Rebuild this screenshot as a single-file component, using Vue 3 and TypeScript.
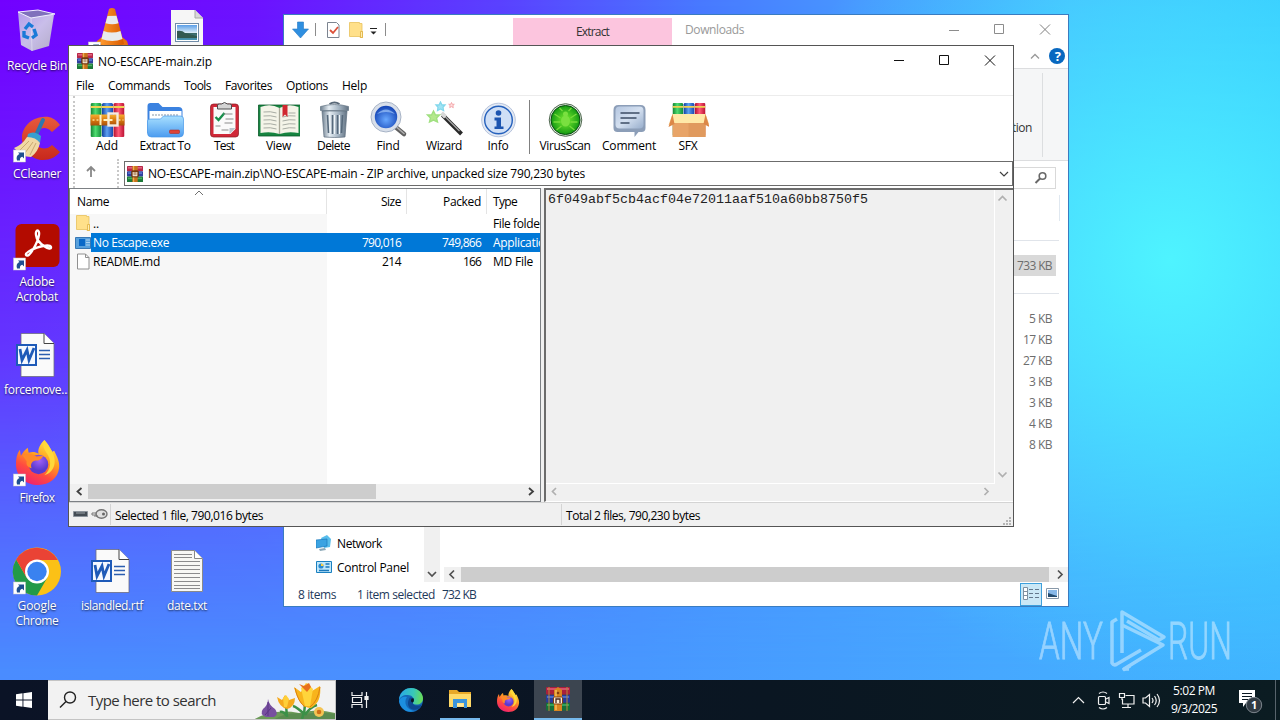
<script setup lang="ts">
interface DeskIcon {
  id: string
  x: number
  y: number
  link: boolean
  lines: { text: string; w: number }[]
}

// Adjusts tracking so that a label occupies the given width in pixels.
const vFit = {
  mounted(el: HTMLElement, binding: { value: number }) {
    const natural = el.getBoundingClientRect().width
    const count = (el.textContent || '').trim().length
    if (count > 0) el.style.letterSpacing = (binding.value - natural) / count + 'px'
  },
}

const deskIcons: DeskIcon[] = [
  { id: 'bin', x: -1, y: 5, link: false, lines: [{ text: 'Recycle Bin', w: 60 }] },
  { id: 'vlc', x: 74, y: 5, link: true, lines: [] },
  { id: 'pic', x: 149, y: 5, link: false, lines: [] },
  { id: 'cc', x: -1, y: 113, link: true, lines: [{ text: 'CCleaner', w: 48 }] },
  { id: 'acro', x: -1, y: 221, link: true, lines: [{ text: 'Adobe', w: 35 }, { text: 'Acrobat', w: 42 }] },
  { id: 'word', x: -1, y: 329, link: false, lines: [{ text: 'forcemove...', w: 66 }] },
  { id: 'fox', x: -1, y: 437, link: true, lines: [{ text: 'Firefox', w: 35 }] },
  { id: 'chrome', x: -1, y: 545, link: true, lines: [{ text: 'Google', w: 39 }, { text: 'Chrome', w: 43 }] },
  { id: 'word', x: 74, y: 545, link: false, lines: [{ text: 'islandled.rtf', w: 62 }] },
  { id: 'txt', x: 149, y: 545, link: false, lines: [{ text: 'date.txt', w: 40 }] },
]

const menus = [
  { text: 'File', w: 18 },
  { text: 'Commands', w: 62 },
  { text: 'Tools', w: 27 },
  { text: 'Favorites', w: 47 },
  { text: 'Options', w: 42 },
  { text: 'Help', w: 25 },
]

const tools = [
  { id: 'add', text: 'Add', cell: 44, w: 22 },
  { id: 'extract', text: 'Extract To', cell: 72, w: 51 },
  { id: 'test', text: 'Test', cell: 46, w: 20 },
  { id: 'view', text: 'View', cell: 63, w: 25 },
  { id: 'delete', text: 'Delete', cell: 47, w: 33 },
  { id: 'find', text: 'Find', cell: 62, w: 23 },
  { id: 'wizard', text: 'Wizard', cell: 50, w: 36 },
  { id: 'info', text: 'Info', cell: 58, w: 21 },
  { id: 'sep', text: '', cell: 2, w: 0 },
  { id: 'virus', text: 'VirusScan', cell: 68, w: 51 },
  { id: 'comment', text: 'Comment', cell: 60, w: 54 },
  { id: 'sfx', text: 'SFX', cell: 58, w: 19 },
]

const files = [
  { icon: 'folder', name: '..', nw: 6, size: '', sw: 0, packed: '', pw: 0, type: 'File folder', tw: 51, sel: false },
  { icon: 'exe', name: 'No Escape.exe', nw: 76, size: '790,016', sw: 39, packed: '749,866', pw: 39, type: 'Application', tw: 59, sel: true },
  { icon: 'doc', name: 'README.md', nw: 67, size: '214', sw: 19, packed: '166', pw: 18, type: 'MD File', tw: 40, sel: false },
]

const sizes = [
  { text: '5 KB', w: 23 },
  { text: '17 KB', w: 29 },
  { text: '27 KB', w: 29 },
  { text: '3 KB', w: 23 },
  { text: '3 KB', w: 23 },
  { text: '4 KB', w: 23 },
  { text: '8 KB', w: 23 },
]
</script>

<template>
  <div class="screen">
    <div class="sky"></div>
    <svg class="defs" width="0" height="0">
      <defs>
        <linearGradient id="gRed" x1="0" x2="1"><stop offset="0" stop-color="#b01030" /><stop offset=".45" stop-color="#ff5a78" /><stop offset="1" stop-color="#b80f30" /></linearGradient>
        <linearGradient id="gBlue" x1="0" x2="1"><stop offset="0" stop-color="#1240a0" /><stop offset=".45" stop-color="#5da0f0" /><stop offset="1" stop-color="#1848b0" /></linearGradient>
        <linearGradient id="gGreen" x1="0" x2="1"><stop offset="0" stop-color="#0f8030" /><stop offset=".45" stop-color="#4fdc70" /><stop offset="1" stop-color="#128a38" /></linearGradient>
        <linearGradient id="gBelt" x1="0" y1="0" x2="0" y2="1"><stop offset="0" stop-color="#f8b030" /><stop offset=".5" stop-color="#d87810" /><stop offset="1" stop-color="#a85008" /></linearGradient>
        <linearGradient id="gFold" x1="0" y1="0" x2="0" y2="1"><stop offset="0" stop-color="#a8e0ff" /><stop offset="1" stop-color="#4c9cf0" /></linearGradient>
        <linearGradient id="gSteel" x1="0" x2="1"><stop offset="0" stop-color="#6f8090" /><stop offset=".3" stop-color="#e4ecf2" /><stop offset=".65" stop-color="#a6b6c4" /><stop offset="1" stop-color="#627282" /></linearGradient>
        <radialGradient id="gLens" cx=".5" cy=".6"><stop offset="0" stop-color="#68a8ff" /><stop offset="1" stop-color="#1748b8" /></radialGradient>
        <radialGradient id="gVirus"><stop offset="0" stop-color="#7cf030" /><stop offset="1" stop-color="#159a14" /></radialGradient>
        <linearGradient id="gNote" x1="0" y1="0" x2="1" y2="1"><stop offset="0" stop-color="#b4c6e0" /><stop offset=".5" stop-color="#d4e0f0" /><stop offset="1" stop-color="#98aecc" /></linearGradient>
        <linearGradient id="gFox" x1=".8" y1="0" x2=".3" y2="1"><stop offset="0" stop-color="#fff04a" /><stop offset=".4" stop-color="#ffa020" /><stop offset=".7" stop-color="#ff4b40" /><stop offset="1" stop-color="#f02070" /></linearGradient>
        <radialGradient id="gFoxCore" cx=".55" cy=".3"><stop offset="0" stop-color="#a060f8" /><stop offset="1" stop-color="#5a3ad0" /></radialGradient>
        <linearGradient id="gBin" x1="0" y1="0" x2="1" y2="1"><stop offset="0" stop-color="#b8a8e8" /><stop offset=".5" stop-color="#d0cce8" /><stop offset="1" stop-color="#b8b8c4" /></linearGradient>
        <linearGradient id="gCone" x1="0" x2="1"><stop offset="0" stop-color="#ff9a30" /><stop offset="1" stop-color="#d85a00" /></linearGradient>
        <linearGradient id="gCC" x1="0" y1="0" x2="0" y2="1"><stop offset="0" stop-color="#e85a3c" /><stop offset="1" stop-color="#c8281c" /></linearGradient>
        <linearGradient id="gEdge" x1="0" y1=".2" x2="1" y2=".3"><stop offset="0" stop-color="#28a8e8" /><stop offset=".6" stop-color="#38c8b8" /><stop offset="1" stop-color="#68dc58" /></linearGradient>
        <linearGradient id="gSky" x1="0" y1="0" x2="0" y2="1"><stop offset="0" stop-color="#5a9ee8" /><stop offset=".5" stop-color="#d8eaf6" /><stop offset=".55" stop-color="#3c6864" /><stop offset="1" stop-color="#4898b8" /></linearGradient>
      </defs>
      <symbol id="rar" viewBox="0 0 16 16">
        <rect x="0" y="0" width="16" height="5.3" rx=".6" fill="#b8284a" /><rect x="1" y="1" width="14" height="1.6" fill="#e0647c" />
        <rect x="0" y="5.3" width="16" height="5.3" rx=".6" fill="#3040a0" /><rect x="1" y="6.3" width="14" height="1.6" fill="#5a78d0" />
        <rect x="0" y="10.6" width="16" height="5.4" rx=".6" fill="#1c7838" /><rect x="1" y="11.6" width="14" height="1.6" fill="#48b060" />
        <rect x="5.3" width="5.4" height="16" fill="#c8721c" /><rect x="6" width="1.2" height="16" fill="#eeb050" />
        <rect x="4.6" y="4.8" width="6.8" height="6.2" rx="1" fill="#7c3b0c" stroke="#602c10" stroke-width=".7" />
        <path d="M6.200 6v3.800h3.600V6M8 6v3.500" fill="none" stroke="#f8ecd8" stroke-width="1.100" />
      </symbol>
      <symbol id="rarbig" viewBox="0 0 24 24">
        <rect x="0" y="0" width="24" height="7.5" rx="1" fill="#a8203c" /><path d="M1 2h22" stroke="#e86880" stroke-width="1.4" />
        <rect x="0" y="8" width="24" height="7.5" rx="1" fill="#263c98" /><path d="M1 10h22" stroke="#5880e0" stroke-width="1.4" />
        <rect x="0" y="16" width="24" height="7.5" rx="1" fill="#14703a" /><path d="M1 18h22" stroke="#40b868" stroke-width="1.4" />
        <path d="M3 0v24M21 0v24" stroke="#b8883c" stroke-width="1" />
        <path d="M8 24V3l4-3 4 3v21z" fill="#d9851f" /><path d="M10 23V3" stroke="#f8c864" stroke-width="1.3" />
        <rect x="7.5" y="10" width="9" height="7" rx="1" fill="#f8ecd4" stroke="#803c10" /><path d="M10 16v-4h4v4" fill="none" stroke="#4c281c" stroke-width="1.3" />
        <circle cx="12" cy="6" r="1.3" fill="#823e10" />
      </symbol>
      <symbol id="fox" viewBox="0 0 48 48">
        <path d="M31 2c5 5 6 9 8 12l2-1c3 6 6 12 5 18-1 10-10 17-21 17C12 48 2 39 2 27 2 21 3 16 6 12l1 6c2-3 4-6 7-8l1 5c3-1 7-1 10 1-1-5 2-10 6-14z" fill="url(#gFox)" />
        <circle cx="25" cy="27" r="10" fill="url(#gFoxCore)" />
        <path d="M9 18c5-3 9-2 14 1l7-1c-2 4-5 5-8 5-5 1-5 5-4 8-4-1-6-4-5-7z" fill="#ff8a28" />
        <path d="M31 2c-3 7 1 11 4 16 3 6 3 14-4 20 11-3 13-15 8-24C37 9 34 8 31 2z" fill="#ffd83a" />
      </symbol>
      <symbol id="folder" viewBox="0 0 16 16">
        <path d="M1.5.5h10v1H14v8h.5v6H12v-1H1.500z" fill="#ffe08a" stroke="#e8c25c" stroke-width=".8" /><path d="M12.500 9.500h2v6h-2z" fill="#ffeeb0" stroke="#e0b040" stroke-width=".8" />
      </symbol>
      <symbol id="books" viewBox="0 0 34 34">
        <rect x="0" y="0" width="11" height="34" rx="1.500" fill="url(#gGreen)" /><rect x="11.500" y="0" width="11" height="34" rx="1.500" fill="url(#gBlue)" /><rect x="23" y="0" width="11" height="34" rx="1.500" fill="url(#gRed)" />
        <path d="M0 4h11M11.500 4h11M23 4h11" stroke="#f0d050" stroke-width="1.800" />
      </symbol>
    </svg>

    <!-- Desktop shortcuts -->
    <div v-for="(d, i) in deskIcons" :key="i" class="desk" :style="{ left: d.x + 'px', top: d.y + 'px' }">
      <svg width="48" height="48" viewBox="0 0 48 48">
        <g v-if="d.id === 'bin'">
          <path d="M5 7l36 3-5 31-17 5-11-6z" fill="url(#gBin)" opacity=".93" />
          <path d="M5 7l20-2 17 4-24 4z" fill="#8070bc" stroke="#f2f0ff" />
          <path d="M18 13l1 33" stroke="#e8e6f4" fill="none" opacity=".6" />
          <path d="M12 24l4-5 4 3M21 24l2 6-4 3M16 33l-5-2 0-5" fill="none" stroke="#1a7ad8" stroke-width="3.400" />
        </g>
        <g v-else-if="d.id === 'vlc'">
          <path d="M9 36l5-4h20l5 4 3 10H6z" fill="#e87010" />
          <path d="M21 4q3-2 6 0l9 35q-12 5-24 0z" fill="url(#gCone)" />
          <path d="M19.500 11l9-.2 2 7.500q-6 2-13 0zM15.500 26q8.500 3 17 0l2 8q-10 4-21 0z" fill="#e8ebee" />
        </g>
        <g v-else-if="d.id === 'pic'">
          <path d="M8 5h24l8 8v34H8z" fill="#f6f6f6" /><path d="M32 5v8h8" fill="#d8d8d8" stroke="#a8a8a8" />
          <rect x="12.500" y="18.500" width="23" height="18" fill="#fff" stroke="#708ca8" /><rect x="14" y="20" width="20" height="15" fill="url(#gSky)" /><path d="M14 26q5-1 8 2l12 3v2H14z" fill="#335a50" />
        </g>
        <g v-else-if="d.id === 'cc'">
          <path d="M47 12C42 5 36 3 30 4 17 5 9 15 9 25c0 12 10 22 21 22 7 0 13-3 17-8l-8-7c-7 7-17 3-17-7 0-9 10-14 17-6z" fill="url(#gCC)" />
          <path d="M24 20L30 7" stroke="#2c78b0" stroke-width="4" stroke-linecap="round" />
          <path d="M15 21q6-4 13 2l-1 7q-5-5-13-5z" fill="#38a0d0" />
          <path d="M14 24q9 0 13 6-2 9-9 14-9 0-17-9 8-3 13-11z" fill="#f0d8a4" /><path d="M16 28l-9 9M20 29l-8 11M23 30l-6 12" stroke="#caa870" fill="none" />
        </g>
        <g v-else-if="d.id === 'acro'">
          <rect x="2.500" y="3" width="44" height="43" rx="6" fill="#b30b00" />
          <path d="M13 34c-2-4 23-13 25-8 1 5-14-3-15-12-1-6 4-6 3 0-1 7-10 24-13 20z" fill="none" stroke="#fff" stroke-width="2.300" />
        </g>
        <g v-else-if="d.id === 'word'">
          <path d="M8 4.500h23l10 10v33H8z" fill="#fafafa" stroke="#6c6c80" stroke-width=".8" /><path d="M31 4.500v10h10" fill="#fff" stroke="#444" />
          <path d="M26 21.500h11M26 25.500h11M26 29.500h11" stroke="#2b5eb0" stroke-width="1.300" />
          <rect x="4" y="16" width="19" height="20" fill="#f4f8ff" stroke="#1e5ab8" stroke-width="2" />
          <path d="M7 20l2 11 5-10 2 10 5-12" fill="none" stroke="#1e5ab8" stroke-width="2.800" />
        </g>
        <use v-else-if="d.id === 'fox'" href="#fox" x="1" y="1" width="47" height="47" />
        <g v-else-if="d.id === 'chrome'">
          <circle cx="24" cy="26.500" r="24" fill="#fbc116" />
          <path d="M3.200 14.500A24 24 0 0 0 24 50.500L34.400 32.500 13.600 32.500z" fill="#229a48" />
          <path d="M3.200 14.500L13.600 32.500 24 26.500V15h20.800A24 24 0 0 0 3.200 14.500z" fill="#ea4335" />
          <circle cx="24" cy="26.500" r="12" fill="#fff" /><circle cx="24" cy="26.500" r="9.700" fill="#3a82f0" />
        </g>
        <g v-else-if="d.id === 'txt'">
          <path d="M8.500 5.500h23l8 8v33h-31z" fill="#f8f8f4" stroke="#8a8a8a" /><path d="M31.500 5.500v8h8" fill="#fff" stroke="#888" />
          <path d="M11 9.500h18M11 12.500h18M11 16.500h26M11 20.500h26M11 24.500h26M11 28.500h26M11 32.500h26M11 36.500h26M11 40.500h26M11 43.500h26" stroke="#8c8c8c" />
        </g>
        <g v-if="d.link">
          <rect x=".5" y="37" width="12" height="12" fill="#fff" stroke="#c8c8c8" stroke-width=".5" />
          <path d="M4 47.500Q2.500 42.500 6.500 41L5 39.500H11V45.500L9.300 43.800Q6.500 44.500 7 47.500z" fill="#1f4f90" />
        </g>
      </svg>
      <div class="desk-label">
        <span v-for="l in d.lines" :key="l.text" v-fit="l.w">{{ l.text }}</span>
      </div>
    </div>

    <!-- Watermark -->
    <svg class="mark" width="220" height="70" viewBox="0 0 220 70">
      <g fill="#dff2ff" stroke="#dff2ff" stroke-width=".8" font-family="Roboto" font-weight="300" font-size="51.500">
        <text x="3" y="50" textLength="64" lengthAdjust="spacingAndGlyphs">ANY</text>
        <text x="132" y="50" textLength="64" lengthAdjust="spacingAndGlyphs">RUN</text>
      </g>
      <g fill="none" stroke="#dff2ff" stroke-width="3.500" stroke-linejoin="round">
        <path d="M81 10l-5 3v41q2 3 5 1l24-14M86 44V3l42 25-5 3-32-19" />
        <path d="M86 16l41 20-39 24 5 0" />
        <path d="M94 57l-7 4" />
      </g>
    </svg>

    <!-- File Explorer -->
    <section class="explorer">
      <header class="ex-title">
        <svg class="ex-quick" width="106" height="30" viewBox="0 0 106 30">
          <path d="M13.500 7h6v7h5l-8 9-8-9h5z" fill="#2f8fe0" stroke="#2678c4" stroke-width=".6" />
          <path d="M31.500 8v13M101.500 8v13" stroke="#8c8c8c" />
          <path d="M43.500 7.500h9l2.500 2.500v12.500H43.500z" fill="#fff" stroke="#7c8490" /><path d="M46 15l3 3 5-6" fill="none" stroke="#dc5038" stroke-width="1.800" />
          <use href="#folder" x="64" y="7" width="16" height="16" />
          <path d="M86 13.500h7" stroke="#222" /><path d="M86.500 16.500h6l-3 3z" fill="#222" />
        </svg>
        <div class="ex-extract"><span v-fit="33">Extract</span></div>
        <div class="ex-name"><span v-fit="59">Downloads</span></div>
        <svg class="ex-ctl" width="134" height="30" viewBox="0 0 134 30" fill="none" stroke="#8c8c8c">
          <path d="M15 15.500h10M60.500 9.500h9v9h-9z" /><path d="M106 9.500l10 10M116 9.500l-10 10" stroke="#808080" />
        </svg>
      </header>
      <div class="ex-tabs">
        <svg width="44" height="23" viewBox="0 0 44 23"><path d="M7 13.500l4-4 4 4" fill="none" stroke="#999" stroke-width="1.300" /><circle cx="33" cy="11" r="8" fill="#0868c0" /></svg>
        <b class="help">?</b>
      </div>
      <div class="ex-ribbon"><span v-fit="20">tion</span><i></i></div>
      <div class="ex-addr">
        <div class="ex-search"><svg width="14" height="14" viewBox="0 0 14 14" fill="none" stroke="#686868" stroke-width="1.600"><circle cx="8.500" cy="5" r="3.300" /><path d="M6 7.500L1.500 12" stroke-width="2" /></svg></div>
      </div>
      <div class="ex-body">
        <nav class="ex-nav">
          <div class="nav-row">
            <svg width="16" height="16" viewBox="0 0 16 16"><path d="M5 3l6-3 4 4-1 8-6 1z" fill="#58bdec" /><path d="M0 5l11-1v7L0 13z" fill="#3ba3e2" stroke="#1a78bc" stroke-width=".7" /><path d="M3 14l6-1 1 2-6 1z" fill="#8ba8b8" /></svg>
            <span v-fit="45">Network</span>
          </div>
          <div class="nav-row">
            <svg width="16" height="16" viewBox="0 0 16 16"><path d="M.5 2.500h15v11H.5z" fill="#bfe6fa" stroke="#1a80c0" /><circle cx="5" cy="7" r="2.600" fill="#2a8ad0" /><path d="M5 7V4.400A2.600 2.600 0 0 1 7.600 7z" fill="#ffd040" /><path d="M9.500 5h4M9.500 8h4M3 11.500h10" stroke="#1b78ba" stroke-width="1.300" /></svg>
            <span v-fit="72">Control Panel</span>
          </div>
        </nav>
        <div class="ex-vs"><svg width="16" height="16" viewBox="0 0 16 16"><path d="M4 6l4 4 4-4" fill="none" stroke="#505050" stroke-width="1.700" /></svg></div>
        <div class="ex-list">
          <div class="ex-cols"><i></i></div>
          <div class="ex-rule first"></div>
          <div class="ex-size on"><span v-fit="35">733 KB</span></div>
          <div class="ex-rule second"></div>
          <div v-for="(s, i) in sizes" :key="i" class="ex-size"><span v-fit="s.w">{{ s.text }}</span></div>
          <div class="ex-hs">
            <svg width="17" height="15" viewBox="0 0 17 15"><path d="M10 3.500l-4 4 4 4" fill="none" stroke="#505050" stroke-width="1.700" /></svg>
            <div class="thumb"></div>
            <svg width="19" height="15" viewBox="0 0 19 15"><path d="M9 3.500l4 4-4 4" fill="none" stroke="#505050" stroke-width="1.700" /></svg>
          </div>
        </div>
      </div>
      <footer class="ex-status">
        <span class="s1" v-fit="38">8 items</span><span class="s2" v-fit="78">1 item selected</span><span class="s3" v-fit="34">732 KB</span>
        <div class="modes">
          <div class="mode on"><svg width="16" height="14" viewBox="0 0 16 14"><path d="M.5.500h4v12h-4zM.5 4.500h4M.5 8.500h4" fill="#fff" stroke="#8090a0" /><path d="M6 2.500h4M6 6.500h4M6 10.500h4M12 2.500h4M12 6.500h4M12 10.500h4" stroke="#64788c" /></svg></div>
          <div class="mode"><svg width="14" height="12" viewBox="0 0 14 12"><path d="M.5.500h12v10H.5z" fill="#fff" stroke="#8898a8" /><path d="M2 2h9v7H2z" fill="#88b8e8" /><path d="M2 5l9 3v1H2z" fill="#244c70" /></svg></div>
        </div>
      </footer>
    </section>

    <!-- WinRAR -->
    <section class="winrar">
      <header class="wr-title">
        <svg width="16" height="16"><use href="#rar" /></svg>
        <span v-fit="114">NO-ESCAPE-main.zip</span>
        <svg class="wr-ctl" width="138" height="30" viewBox="0 0 138 30" fill="none" stroke="#111"><path d="M19 14.500h10" /><path d="M64.500 9.500h9v9h-9z" /><path d="M110 9.500l10 10M120 9.500l-10 10" /></svg>
      </header>
      <nav class="wr-menu"><span v-for="m in menus" :key="m.text" v-fit="m.w">{{ m.text }}</span></nav>
      <div class="wr-tools">
        <div v-for="t in tools" :key="t.id" class="tool" :class="{ split: t.id === 'sep' }" :style="{ width: t.cell + 'px' }">
          <svg v-if="t.id !== 'sep'" width="42" height="38" viewBox="-.5 0 42 38">
            <g v-if="t.id === 'add'">
              <use href="#books" x="4" y="2" width="34" height="34" />
              <rect x="4" y="13.500" width="34" height="11" fill="url(#gBelt)" /><path d="M6 19h9M32 19h5" stroke="#fce090" stroke-width="1.600" stroke-dasharray="2 2" />
              <rect x="22" y="12.500" width="9" height="12" fill="none" stroke="#f4ece0" stroke-width="2.400" /><path d="M17 19h9M14 14v10" stroke="#fff0c0" stroke-width="2" />
            </g>
            <g v-else-if="t.id === 'extract'">
              <path d="M3 5q0-3 3-3h8l4 4h16q4 0 4 4v22H3z" fill="#3b82e0" /><path d="M5 10h32v14H5z" fill="#fff" />
              <path d="M8 14h27" stroke="#8898a8" stroke-width="2" stroke-dasharray="1 2" />
              <path d="M3 20q0-2 3-2h10l3-3h17q3 0 3 3v14q0 4-4 4H7q-4 0-4-4z" fill="url(#gFold)" stroke="#4898e8" stroke-width=".7" /><rect x="25" y="29" width="10" height="3.500" rx="1" fill="#dc4338" stroke="#a82018" stroke-width=".5" />
            </g>
            <g v-else-if="t.id === 'test'">
              <rect x="7" y="3" width="28" height="33" rx="3" fill="#d02838" stroke="#8a1820" stroke-width=".7" /><path d="M10 6h22v22l-5 5H10z" fill="#fafafa" /><path d="M32 27l-6 6v-6z" fill="#bcc4cc" />
              <path d="M14 4q0-1 2-1h2q3-3 6 0h2q2 0 2 1v4H14z" fill="#d4d4d4" stroke="#4c4c4c" />
              <path d="M12 16l3 3 6-7" fill="none" stroke="#18904c" stroke-width="2.400" /><path d="M22 18h8M21 22h8M20 13h9M12 25h5M18 29h7" stroke="#8c8c8c" />
            </g>
            <g v-else-if="t.id === 'view'">
              <path d="M0 4h42v31H0z" fill="#168440" stroke="#0a5828" stroke-width=".8" /><path d="M2 6q10-4 19 1 9-5 19-1v26q-10-2-19 1-9-3-19-1z" fill="#f4f4e8" /><path d="M21 7v26" stroke="#a8a898" stroke-width="1.300" />
              <path d="M5 11q7-1 13 1M5 15q7-1 13 1M5 19q7-1 13 1M5 23q7-1 13 1M5 27q7-1 13 1M24 16q7-2 13-1M24 20q7-2 13-1M24 24q7-2 13-1M24 28q7-2 13-1M30 12h7" fill="none" stroke="#a8aca4" /><path d="M24 4h5v12l-2.500-2.500L24 16z" fill="#d02830" />
            </g>
            <g v-else-if="t.id === 'delete'">
              <path d="M16 3q5-3 10 0" fill="none" stroke="#586878" stroke-width="2" /><path d="M7 5.500q14-4 28 0v4H7z" fill="url(#gSteel)" stroke="#627282" stroke-width=".7" /><path d="M8.500 10h25l-2 26q-10 1-21 0z" fill="url(#gSteel)" stroke="#607080" stroke-width=".7" />
              <path d="M14 14l1 18M19 14v19M24 14v19M29 14l-1 18" stroke="#56697b" stroke-width="1.600" /><path d="M16 14l1 18M21 14v19M26 14v19" stroke="#f0f5f8" />
            </g>
            <g v-else-if="t.id === 'find'">
              <path d="M28 26l8.500 7" stroke="#606060" stroke-width="4.500" stroke-linecap="round" /><path d="M29 26l8 7" stroke="#b0b0b0" stroke-width="1.500" />
              <circle cx="18.500" cy="16" r="13" fill="url(#gLens)" stroke="#d8dfea" stroke-width="3.600" /><circle cx="18.500" cy="16" r="15" fill="none" stroke="#8898b0" stroke-width=".7" /><path d="M9.500 13q9-9 18 0-9-4-18 0z" fill="#b0d4ff" opacity=".6" />
            </g>
            <g v-else-if="t.id === 'wizard'">
              <path d="M19 14l19 19" stroke="#282828" stroke-width="4" /><path d="M19 13l17 17" stroke="#a8a8a8" stroke-width="1.200" /><path d="M18 12l4 4" stroke="#d8d8d8" stroke-width="4" />
              <path d="M10 10l2 4 4 0-3 3 1 4-4-2-4 2 1-4-3-3 4 0z" fill="#b4e88c" stroke="#a0e080" stroke-width="1.400" />
              <path d="M17 1l1.500 3 3 0-2 2.300.6 3.200L17 8l-3 1.500.5-3.200-2-2.300 3 0z" fill="#a0e4f4" stroke="#84d8ec" stroke-width="1.300" /><path d="M28 1.500l.8 1.800 2 0-1.500 1.400.5 2L28 5.600l-1.800 1 .5-1.900-1.500-1.400 2 0z" fill="#fdd" stroke="#f4a8ac" />
            </g>
            <g v-else-if="t.id === 'info'">
              <circle cx="21" cy="19" r="16.800" fill="#e4eaf4" stroke="#a8b8d4" stroke-width=".8" /><circle cx="21" cy="19" r="13.800" fill="#cfdff6" stroke="#2460bc" stroke-width="1.400" />
              <circle cx="21" cy="12" r="2.800" fill="#1c54b0" /><path d="M17 16.500h6.500v9H26V28h-9v-2.500h2v-6h-2z" fill="#1c54b0" />
            </g>
            <g v-else-if="t.id === 'virus'">
              <circle cx="21" cy="19" r="16.300" fill="#d8e4d8" stroke="#506850" /><circle cx="21" cy="19" r="14.500" fill="url(#gVirus)" stroke="#084c10" />
              <ellipse cx="21" cy="20" rx="4.500" ry="5.500" fill="#7ae040" /><circle cx="21" cy="13" r="2.500" fill="#7ae040" /><path d="M16 17l-6-4M26 17l6-4M16 21H9M26 21h7M17 25l-5 4M25 25l5 4M18 10l-3-3M24 10l3-3" fill="none" stroke="#78dc3c" stroke-width="1.300" />
            </g>
            <g v-else-if="t.id === 'comment'">
              <path d="M10 4h22q5 0 5 5v18q0 4-4 4h-3l-4 5v-5H9q-4 0-4-4V9q0-5 5-5z" fill="#8c9eb8" /><path d="M11 5.500h20q4 0 4 4v14q0 4-4 4H11q-4 0-4-4v-14q0-4 4-4z" fill="url(#gNote)" />
              <path d="M12 12h19M12 17h16M12 22h9" stroke="#3c4c64" stroke-width="1.500" />
            </g>
            <g v-else-if="t.id === 'sfx'">
              <use href="#books" x="5" y="2" width="33" height="33" /><path d="M5 19h33v17H5z" fill="#e8a468" /><path d="M21 19h17v17H21z" fill="#e09a5e" />
              <path d="M5 13h33l4 11-5-2H5l-4 2z" fill="#f7cf92" /><path d="M5 13h33v9H5z" fill="#ffe9a8" /><path d="M5 13L1 26l6-3zM38 13l4 13-6-3z" fill="#dc8848" />
            </g>
          </svg>
          <span v-if="t.id !== 'sep'" v-fit="t.w">{{ t.text }}</span>
        </div>
      </div>
      <div class="wr-addr">
        <svg class="up" width="12" height="14" viewBox="0 0 12 14"><path d="M6 12V2M2 6L6 2l4 4" fill="none" stroke="#888" stroke-width="1.800" /></svg>
        <div class="grip"></div>
        <div class="wr-field">
          <svg width="16" height="16"><use href="#rar" /></svg>
          <span v-fit="437">NO-ESCAPE-main.zip\NO-ESCAPE-main - ZIP archive, unpacked size 790,230 bytes</span>
          <svg class="drop" width="10" height="8" viewBox="0 0 10 8"><path d="M1 2l4 4 4-4" fill="none" stroke="#404040" stroke-width="1.200" /></svg>
        </div>
      </div>
      <div class="wr-panes">
        <div class="wr-list">
          <div class="wr-head">
            <div class="c-name"><span v-fit="32">Name</span><svg width="10" height="6" viewBox="0 0 10 6"><path d="M1 5l4-4 4 4" fill="none" stroke="#707070" /></svg></div>
            <div class="c-size"><span v-fit="20">Size</span></div>
            <div class="c-pack"><span v-fit="38">Packed</span></div>
            <div class="c-type"><span v-fit="24">Type</span></div>
          </div>
          <div class="wr-rows">
            <div v-for="f in files" :key="f.name" class="wr-row" :class="{ sel: f.sel }">
              <div class="c-ico">
                <svg width="16" height="17" viewBox="0 0 16 17">
                  <use v-if="f.icon === 'folder'" href="#folder" width="16" height="16" />
                  <g v-else-if="f.icon === 'exe'"><path d="M.5 3.500h15v11H.5z" fill="#58a0dc" stroke="#3878b4" /><path d="M4 5h6v7H4z" fill="#0868c8" /><path d="M11 6h4M11 8.500h4M11 11h4" stroke="#a8d0f0" /></g>
                  <g v-else><path d="M2.500 1h8l3.500 3.500V16H2.500z" fill="#fff" stroke="#909090" /><path d="M10.500 1v3.500H14" fill="none" stroke="#909090" /></g>
                </svg>
              </div>
              <div class="c-main">
                <div class="n"><span v-fit="f.nw">{{ f.name }}</span></div>
                <div class="s"><span v-if="f.size" v-fit="f.sw">{{ f.size }}</span></div>
                <div class="p"><span v-if="f.packed" v-fit="f.pw">{{ f.packed }}</span></div>
                <div class="t"><span v-fit="f.tw">{{ f.type }}</span></div>
              </div>
            </div>
          </div>
          <div class="wr-hs">
            <svg width="18" height="15" viewBox="0 0 18 15"><path d="M11.500 4l-4 3.500 4 3.500" fill="none" stroke="#404040" stroke-width="1.800" /></svg>
            <div class="thumb"></div>
            <svg class="r" width="18" height="15" viewBox="0 0 18 15"><path d="M7 4l4 3.500L7 11" fill="none" stroke="#404040" stroke-width="1.800" /></svg>
          </div>
        </div>
        <div class="wr-note">
          <div class="note-top">
            <div class="note-text"><span v-fit="320">6f049abf5cb4acf04e72011aaf510a60bb8750f5</span></div>
            <div class="note-vs">
              <svg width="16" height="16" viewBox="0 0 16 16"><path d="M3.500 10.500l4-4 4 4" fill="none" stroke="#b0b0b0" stroke-width="1.700" /></svg>
              <svg width="16" height="16" viewBox="0 0 16 16"><path d="M3.500 5.500l4 4 4-4" fill="none" stroke="#b0b0b0" stroke-width="1.700" /></svg>
            </div>
          </div>
          <div class="note-hs">
            <svg width="16" height="15" viewBox="0 0 16 15"><path d="M10 4L6.500 7.500 10 11" fill="none" stroke="#b0b0b0" stroke-width="1.700" /></svg>
            <svg width="16" height="15" viewBox="0 0 16 15"><path d="M5.500 4l3.500 3.500L5.500 11" fill="none" stroke="#b0b0b0" stroke-width="1.700" /></svg>
          </div>
        </div>
      </div>
      <footer class="wr-status">
        <svg width="36" height="14" viewBox="0 0 36 14"><path d="M.5 3.500h14v5H.5z" fill="#444c54" stroke="#8c949c" /><path d="M3 5h9" stroke="#9aa2a8" /><ellipse cx="28.500" cy="6" rx="5.500" ry="4.200" fill="#e0e0e0" stroke="#747474" stroke-width="1.400" /><circle cx="30.500" cy="6" r="1.500" fill="#666" /><path d="M24 5h-5v2h5M21 8h4" fill="none" stroke="#777" /></svg>
        <div class="st-a"><span v-fit="148">Selected 1 file, 790,016 bytes</span></div>
        <div class="st-b"><span v-fit="134">Total 2 files, 790,230 bytes</span></div>
        <svg class="grab" width="9" height="9" viewBox="0 0 9 9" fill="#b4b4b4"><path d="M6 0h2v2H6zM3 3h2v2H3zM6 3h2v2H6zM0 6h2v2H0zM3 6h2v2H3zM6 6h2v2H6z" /></svg>
      </footer>
    </section>

    <!-- Taskbar -->
    <footer class="bar">
      <div class="start"><svg width="16" height="16" viewBox="0 0 16 16" fill="#fff"><path d="M0 2.200L6.500 1.300v6.200H0zM7.400 1.200L16 0v7.500H7.400zM0 8.400h6.500v6.300L0 13.800zM7.400 8.400H16V16l-8.600-1.200z" /></svg></div>
      <div class="search">
        <svg width="18" height="18" viewBox="0 0 18 18" fill="none" stroke="#222" stroke-width="1.400"><circle cx="11" cy="6.500" r="5.500" /><path d="M7 10.500L1 16.500" /></svg>
        <span v-fit="128">Type here to search</span>
        <svg class="bloom" width="82" height="40" viewBox="0 0 82 40">
          <path d="M0 40Q20 28 46 33q18-5 36 0v7z" fill="#6c9a58" /><path d="M20 40q14-9 32-6 16-3 30 0v6z" fill="#5a8c50" />
          <path d="M15 19q1 6 7 10 4 5-1 8h-8q-7-3-3-8 5-4 5-10z" fill="#7850a0" /><path d="M15 22v14M18 28l-6 7" stroke="#5a3484" />
          <path d="M33 25l1 12M52 24q0 8-3 15M34 36q-4-5-7-4M51 34q-7-7-11-8M52 35q5-8 12-10" stroke="#3c9048" stroke-width="2.500" fill="none" />
          <path d="M24 17l5 3 3-5 4 5 6-2q0 9-8 11-8-2-10-12z" fill="#f5a81c" /><path d="M30 18l3-3 3 4-2 8h-3z" fill="#ffcf38" />
          <path d="M41 7l7 5 5-9 6 8 8-5q2 16-9 22-12 0-17-21z" fill="#f8b41c" /><path d="M48 8l6-5 6 6-3 17h-5z" fill="#ffd53c" /><path d="M46 4l5 2 5-3 2 4-4 5z" fill="#e8701c" /><path d="M42 8q3 14 10 19M67 7q-2 14-10 20" stroke="#dc8010" fill="none" />
          <circle cx="66" cy="32" r="5" fill="#f4c454" /><circle cx="66" cy="32" r="2.300" fill="#d07018" />
        </svg>
      </div>
      <div class="app"><svg width="18" height="18" viewBox="0 0 18 18" fill="none" stroke="#f0f0f0" stroke-width="1.200"><path d="M1 1v3.500h10V1M1 17v-3.500h10V17M1.500 6.500h9v5h-9zM15.500 1v16" /><path d="M14 5.500h3v3h-3z" fill="#f0f0f0" /></svg></div>
      <div class="app edge">
        <svg width="24" height="24" viewBox="0 0 24 24"><circle cx="12" cy="12" r="12" fill="#1468b8" /><path d="M.2 10C2 3 7 0 12 0c8 0 12 6 12 10.500S20 17 17 16.500c-3 0-4-1.500-3-3 2-4-2-7-6-6.500C4 7 1 9 .2 12z" fill="url(#gEdge)" /><path d="M8 9c-4 6 0 13 8 14-8 3-15-3-16-10 1-4 5-5 8-4z" fill="#1c8fe0" /><path d="M14.500 13c-2 3 1 5 4.500 4.500 2 0 3-.5 4-1-2 5-7 6-9.500 5C8 20 8 13 11 9.500c3 0 5 1 3.500 3.500z" fill="#0d4890" /><path d="M14.500 10.500q1 3-.8 4-3-1-1-4z" fill="#0b1523" /></svg>
      </div>
      <div class="app run"><svg width="22" height="20" viewBox="0 0 22 20"><path d="M0 1h8l2 2h12v15H0z" fill="#e8a828" /><path d="M0 5h22v13H0z" fill="#ffd968" /><path d="M4 10h14v9h-3v-5H8v5H4z" fill="#3a94dc" /><path d="M8 14.500h6.500v3H8z" fill="#ffe9a0" /></svg></div>
      <div class="app ff"><svg width="24" height="24"><use href="#fox" /></svg></div>
      <div class="app on"><svg width="24" height="24"><use href="#rarbig" /></svg></div>
      <div class="tray">
        <svg width="90" height="20" viewBox="0 0 90 20" fill="none" stroke="#f0f0f0" stroke-width="1.200">
          <path d="M1 13l5.500-5.500L12 13" />
          <rect x="26.500" y="6.500" width="7" height="8" rx="1" /><path d="M34 9l3-1.500v6L34 12M27 3.500q4-3 8 0M27 17.500q4 3 8 0" />
          <path d="M53.500 5.500H62v8.500H50.500V9M50 17.500h9M56 14v3" /><path d="M47.500 3.500h5v4h-5zM50 7.500V10" />
          <path d="M71 8h2.500l4-3.500v12L73.500 13H71zM80 8q2 2.500 0 5M82.500 6q3.500 4.500 0 9M85 4q5 6.500 0 13" />
        </svg>
        <div class="clock"><span v-fit="42">5:02 PM</span><span v-fit="46">9/3/2025</span></div>
        <div class="notif">
          <svg width="28" height="28" viewBox="0 0 28 28"><path d="M2 4h16v13H9l-3 4v-4H2z" fill="#fff" /><path d="M5 7.500h10M5 10.500h10M5 13.500h6" stroke="#0b1822" /><circle cx="17" cy="19" r="7.700" fill="#303a42" stroke="#7c848c" /></svg>
          <b>1</b>
        </div>
        <div class="peek"></div>
      </div>
    </footer>
  </div>
</template>

<style>
html,
body {
  margin: 0;
  overflow: hidden;
}
</style>

<style scoped>
* {
  box-sizing: border-box;
}
.screen {
  position: relative;
  width: 1280px;
  height: 720px;
  overflow: hidden;
  font-family: "Open Sans", "Noto Sans", sans-serif;
  font-size: 12px;
  font-stretch: 90%;
  color: #000;
  background: linear-gradient(90deg, #4a8cff 0, #4a90ff 400px, #4898ff 640px, #46a8ff 1000px, #40b4ff 1280px);
}
.sky {
  position: absolute;
  inset: 0;
}
.sky::before,
.sky::after {
  content: "";
  position: absolute;
  inset: 0;
}
.sky::before {
  background: linear-gradient(90deg, #7200ff 0, #6c10ff 250px, #5a40ff 500px, #4878ff 700px, #4898ff 860px, #44b8ff 1070px, #34c4ff 1280px);
  mask-image: linear-gradient(180deg, #000 0, rgba(0, 0, 0, 0.83) 180px, rgba(0, 0, 0, 0.62) 350px, rgba(0, 0, 0, 0.26) 520px, transparent 670px);
}
.sky::after {
  background: radial-gradient(ellipse 420px 430px at 1170px 260px, rgba(80, 250, 255, 0.9), rgba(76, 240, 255, 0.62) 40%, rgba(72, 230, 255, 0.25) 75%, transparent);
}
span {
  display: inline-block;
  white-space: pre;
  flex: none;
}
svg {
  display: block;
  flex: none;
}
.defs {
  position: absolute;
}
.desk {
  position: absolute;
  width: 76px;
  display: flex;
  flex-direction: column;
  align-items: center;
}
.desk > svg {
  overflow: visible;
}
.desk-label {
  margin-top: 5px;
  display: flex;
  flex-direction: column;
  align-items: center;
  color: #fff;
  line-height: 15px;
  text-shadow: 0 1px 2px rgba(0, 0, 0, 0.7);
}
.mark {
  position: absolute;
  left: 1036px;
  top: 609px;
  opacity: 0.52;
}

.explorer {
  position: absolute;
  left: 283px;
  top: 14px;
  width: 786px;
  height: 593px;
  border: 1px solid #3a7cc0;
  background: #fff;
  display: flex;
  flex-direction: column;
}
.ex-title {
  height: 30px;
  display: flex;
}
.ex-extract {
  margin-left: 123px;
  margin-top: 3px;
  width: 159px;
  display: flex;
  justify-content: center;
  align-items: center;
  background: #fcc5de;
  color: #333;
}
.ex-name {
  flex: 1;
  padding-left: 13px;
  line-height: 30px;
  color: #999;
}
.ex-ctl {
  width: 134px;
}
.ex-tabs {
  height: 23px;
  display: flex;
  justify-content: flex-end;
  position: relative;
}
.help {
  position: absolute;
  right: 7px;
  top: 3px;
  color: #fff;
  font-size: 13px;
  line-height: 16px;
}
.ex-ribbon {
  height: 93px;
  display: flex;
  align-items: center;
  justify-content: flex-end;
  background: #f5f6f7;
  border-top: 1px solid #dcdddf;
  border-bottom: 1px solid #dcdddf;
  color: #333;
}
.ex-ribbon span {
  margin-top: 26px;
}
.ex-ribbon i {
  margin-left: 10px;
  margin-right: 25px;
  width: 1px;
  height: 84px;
  background: #dcdee0;
}
.ex-addr {
  height: 34px;
  padding: 6px 12px 6px 0;
  display: flex;
  justify-content: flex-end;
}
.ex-search {
  width: 200px;
  border: 1px solid #d9d9d9;
  display: flex;
  align-items: center;
  justify-content: flex-end;
  padding-right: 7px;
}
.ex-body {
  flex: 1;
  display: flex;
  min-height: 0;
}
.ex-nav {
  width: 140px;
  display: flex;
  flex-direction: column;
  justify-content: flex-end;
  padding-bottom: 3px;
}
.nav-row {
  height: 24px;
  display: flex;
  align-items: center;
  gap: 5px;
  padding-left: 32px;
}
.ex-vs {
  width: 16px;
  background: #f0f0f0;
  display: flex;
  align-items: flex-end;
}
.ex-list {
  flex: 1;
  display: flex;
  flex-direction: column;
  align-items: flex-end;
  padding-left: 4px;
}
.ex-cols {
  height: 26px;
  display: flex;
  padding-right: 8px;
}
.ex-cols i {
  width: 1px;
  background: #e0e8f0;
}
.ex-rule {
  width: 600px;
  height: 1px;
  background: #e0e4ea;
  margin-right: 9px;
}
.ex-rule.first {
  margin-top: 19px;
  margin-bottom: 14px;
}
.ex-rule.second {
  margin-top: 17px;
  margin-bottom: 14px;
}
.ex-size {
  width: 600px;
  height: 21px;
  margin-right: 12px;
  padding-right: 4px;
  display: flex;
  justify-content: flex-end;
  align-items: center;
  color: #6d6d6d;
}
.ex-size.on {
  background: #d9d9d9;
}
.ex-hs {
  width: 100%;
  height: 15px;
  margin-top: auto;
  background: #f0f0f0;
  display: flex;
}
.thumb {
  flex: 1;
  background: #cdcdcd;
}
.ex-status {
  height: 24px;
  display: flex;
  align-items: center;
  color: #1e395b;
  padding-left: 14px;
}
.s2 {
  margin-left: 21px;
}
.s3 {
  margin-left: 7px;
}
.modes {
  margin-left: auto;
  display: flex;
  padding-right: 4px;
}
.mode {
  width: 22px;
  height: 23px;
  display: flex;
  align-items: center;
  justify-content: center;
}
.mode.on {
  background: #cbe8f6;
  border: 1px solid #3ea0dc;
}

.winrar {
  position: absolute;
  left: 68px;
  top: 45px;
  width: 946px;
  height: 482px;
  border: 1px solid #555;
  background: #fff;
  display: flex;
  flex-direction: column;
}
.wr-title {
  height: 30px;
  display: flex;
  align-items: center;
  padding-left: 8px;
  gap: 5px;
}
.wr-ctl {
  margin-left: auto;
}
.wr-menu {
  height: 20px;
  display: flex;
  align-items: center;
  gap: 14px;
  padding-left: 7px;
  border-bottom: 1px solid #ececec;
}
.wr-tools {
  height: 63px;
  display: flex;
  margin-left: 4px;
  padding-left: 10px;
  border-left: 2px dotted #c8c8c8;
}
.tool {
  display: flex;
  flex-direction: column;
  align-items: center;
  padding-top: 5px;
}
.tool span {
  margin-top: -1px;
  line-height: 16px;
}
.split {
  border-left: 1px solid #808080;
  margin: 4px 0 5px 2px;
}
.wr-addr {
  height: 29px;
  display: flex;
  margin-left: 4px;
  border-left: 2px dotted #c8c8c8;
}
.up {
  margin: 6px 0 0 10px;
}
.grip {
  width: 1px;
  margin-left: 20px;
  border-left: 2px dotted #c8c8c8;
}
.wr-field {
  margin: 2px 0 2px 5px;
  flex: 1;
  border: 1px solid #6c6c6c;
  display: flex;
  align-items: center;
  padding-left: 2px;
  gap: 5px;
}
.drop {
  margin-left: auto;
  margin-right: 3px;
}
.wr-panes {
  height: 314px;
  display: flex;
  gap: 3px;
  background: #f0f0f0;
}
.wr-list {
  width: 472px;
  border: 1px solid #7c8084;
  background: #fff;
  display: flex;
  flex-direction: column;
  overflow: hidden;
}
.wr-head {
  height: 25px;
  display: flex;
  line-height: 26px;
}
.wr-head > div {
  display: flex;
  border-right: 1px solid #e4e4e4;
}
.c-name {
  width: 257px;
  padding-left: 7px;
}
.c-name svg {
  margin-left: 85px;
  margin-top: 1px;
}
.c-size,
.c-pack {
  width: 80px;
  justify-content: flex-end;
  padding-right: 5px;
}
.wr-head .c-type {
  padding-left: 6px;
  border: 0;
}
.wr-rows {
  flex: 1;
  background: linear-gradient(90deg, #f7f7f7 257px, #fff 257px);
}
.wr-row {
  height: 19px;
  display: flex;
  align-items: center;
}
.c-ico {
  width: 21px;
  padding-left: 5px;
}
.c-main {
  flex: 1;
  height: 19px;
  display: flex;
  align-items: center;
}
.sel .c-main {
  background: #0078d7;
  color: #fff;
}
.n {
  width: 236px;
  padding-left: 2px;
}
.s,
.p {
  width: 80px;
  display: flex;
  justify-content: flex-end;
  padding-right: 6px;
}
.t {
  width: 53px;
  padding-left: 6px;
  overflow: hidden;
}
.t span {
  display: block;
  width: max-content;
}
.wr-hs {
  height: 17px;
  padding-bottom: 2px;
  display: flex;
  background: #f0f0f0;
}
.wr-hs .thumb {
  flex: none;
  width: 288px;
}
.wr-hs .r {
  margin-left: auto;
}
.wr-note {
  flex: 1;
  border-left: 2px solid #6c6c6c;
  border-top: 2px solid #6c6c6c;
  border-bottom: 1px solid #fff;
  display: flex;
  flex-direction: column;
  background: #f0f0f0;
}
.note-top {
  flex: 1;
  display: flex;
}
.note-text {
  flex: 1;
  padding: 2px 0 0 2px;
  border-right: 1px solid #fff;
  border-bottom: 1px solid #fff;
  font-family: "Liberation Mono", monospace;
  font-size: 13.3px;
  line-height: 16px;
  color: #222;
}
.note-vs {
  width: 18px;
  display: flex;
  flex-direction: column;
  justify-content: space-between;
  padding-bottom: 1px;
}
.note-hs {
  height: 17px;
  padding-right: 18px;
  display: flex;
  justify-content: space-between;
}
.wr-status {
  flex: 1;
  border-top: 1px solid #d4d4d4;
  background: #f0f0f0;
  display: flex;
  align-items: center;
  padding-left: 4px;
}
.st-a,
.st-b {
  height: 21px;
  line-height: 23px;
  border-left: 1px solid #d4d4d4;
  padding-left: 4px;
}
.st-a {
  margin-left: 1px;
  width: 451px;
}
.grab {
  margin-left: auto;
  margin-right: 1px;
  align-self: flex-end;
}

.bar {
  position: absolute;
  left: 0;
  top: 680px;
  width: 1280px;
  height: 40px;
  display: flex;
  background: linear-gradient(90deg, #0b1326, #0a1622 60%, #0b1c22);
}
.start {
  width: 48px;
  display: flex;
  align-items: center;
  justify-content: center;
}
.search {
  width: 288px;
  background: #f2f2f2;
  border: 1px solid #c4c4c4;
  border-left: 0;
  display: flex;
  align-items: center;
  padding-left: 11px;
  font-size: 15px;
  color: #333;
  overflow: hidden;
}
.search span {
  margin-left: 11px;
}
.bloom {
  margin-left: auto;
}
.app {
  width: 48px;
  display: flex;
  align-items: center;
  justify-content: center;
}
.edge {
  width: 54px;
}
.app.run {
  width: 40px;
  margin: 0 2px;
  border-bottom: 2px solid #76b9ed;
}
.ff {
  width: 52px;
}
.on.app {
  background: #3c4550;
  border-bottom: 2px solid #76b9ed;
}
.tray {
  margin-left: auto;
  display: flex;
  align-items: center;
  color: #fff;
}
.clock {
  margin-left: 1px;
  width: 62px;
  display: flex;
  flex-direction: column;
  align-items: center;
  line-height: 18px;
}
.notif {
  position: relative;
  width: 28px;
  margin-left: 12px;
}
.notif b {
  position: absolute;
  left: 14px;
  top: 11px;
  font-size: 11px;
  line-height: 16px;
}
.peek {
  width: 5px;
  height: 40px;
  margin-left: 10px;
  border-left: 1px solid #58646c;
}
</style>
